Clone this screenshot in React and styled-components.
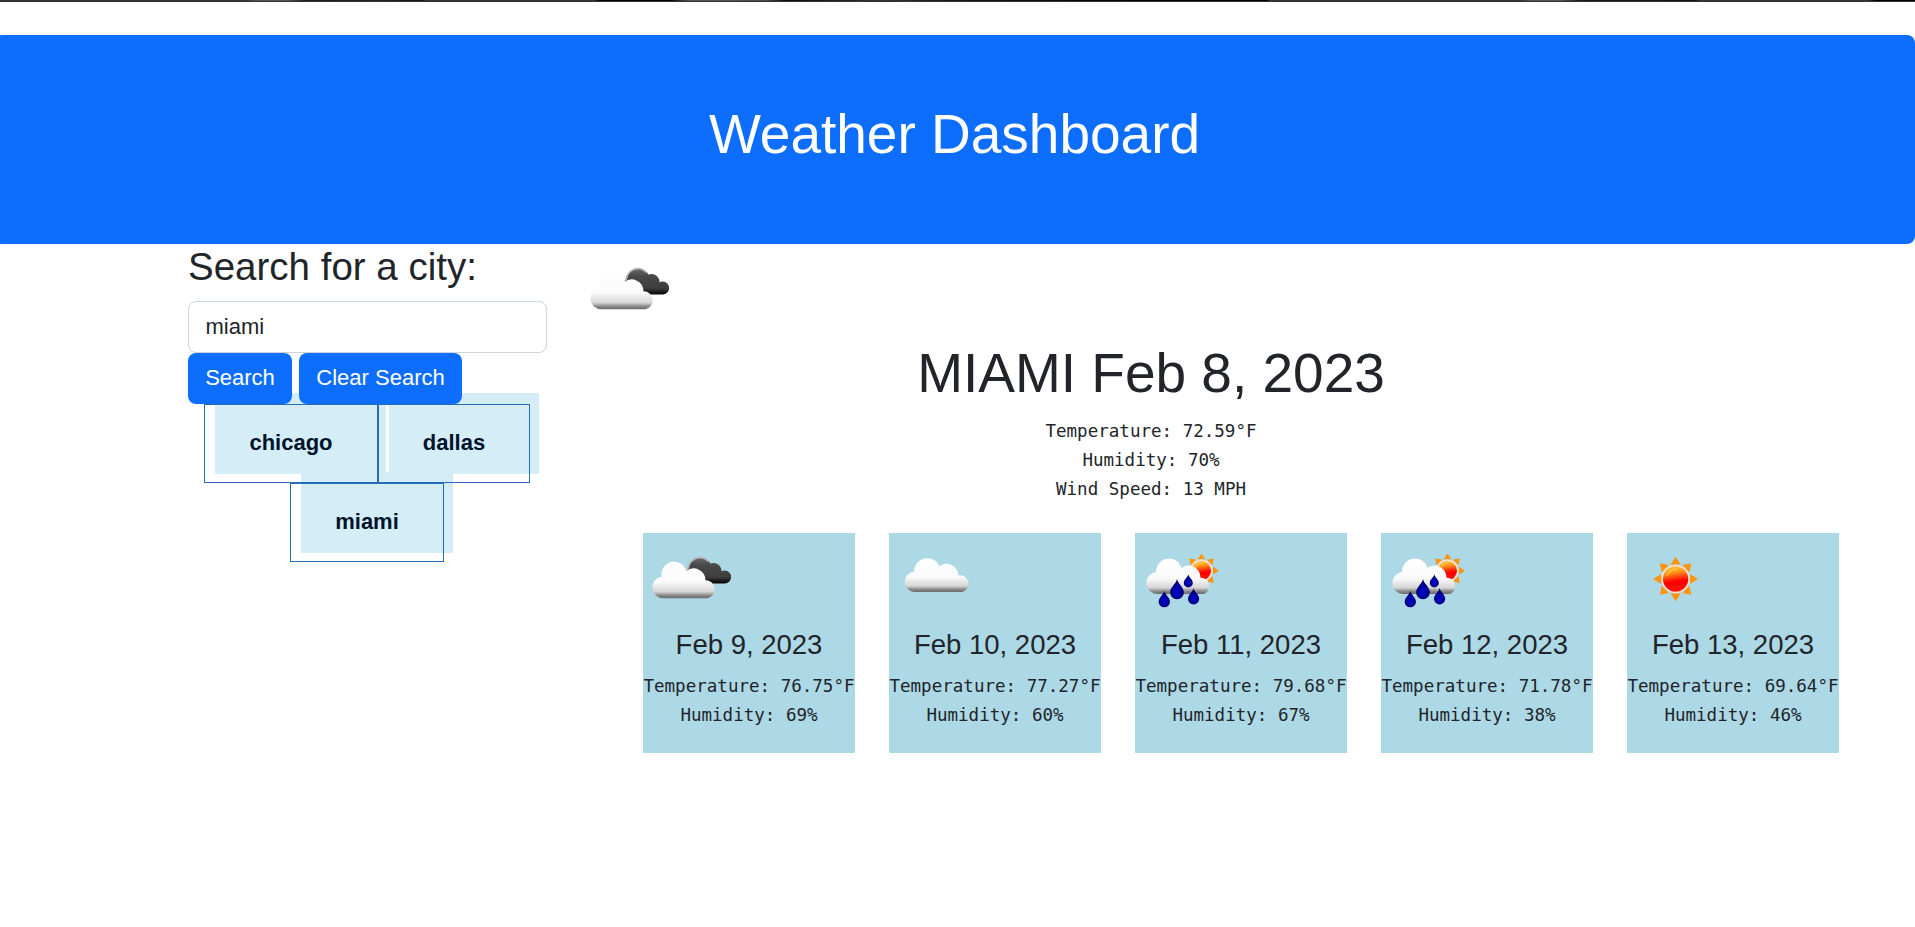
import React from "react";
import styled, { createGlobalStyle } from "styled-components";

const sans = '"Liberation Sans", Arial, sans-serif';
const mono = '"DejaVu Sans Mono", monospace';

const GlobalStyle = createGlobalStyle`
  *, *::before, *::after { box-sizing: border-box; }
  body {
    margin: 0;
    background: #fff;
    color: #212529;
    font-family: ${sans};
    font-size: 22px;
    line-height: 1.5;
    overflow: hidden;
  }
`;

const TopEdge = styled.div`
  height: 2px;
  border-bottom: 1px solid #363233;
  background: linear-gradient(90deg, #363233 0, #363233 12.8%, #565656 13.5%, #565656 15%, #1c1c1c 16%, #242424 20%, #111 22%, #363233 22.3%, #363233 31%, #000 31.3%, #000 35%, #5a5a5a 36%, #4c4c4c 40%, #0a0a0a 41%, #333 46%, #151515 50%, #000 60%, #000 66.2%, #363233 66.3%, #363233 79.3%, #565656 80%, #565656 81.5%, #1c1c1c 82.5%, #111 88.5%, #363233 88.8%, #363233 97.5%, #000 98%);
`;

const Banner = styled.header`
  height: 209px;
  margin: 33px 0 0 -6px;
  padding-top: 66px;
  border-radius: 8px;
  background: #0d6efd;
  color: #fff;
  text-align: center;
`;

const Title = styled.h1`
  margin: 0;
  font-size: 55px;
  font-weight: 400;
  line-height: 66px;
`;

const Page = styled.main`
  display: flex;
  align-items: flex-start;
  gap: 34px;
  padding-left: 188px;
`;

const Sidebar = styled.aside`
  width: 359px;
  flex: none;
`;

const SearchTitle = styled.h3`
  margin: 0 0 11px;
  font-size: 38.5px;
  font-weight: 400;
  line-height: 46px;
`;

const SearchInput = styled.input`
  display: block;
  width: 100%;
  height: 52px;
  padding: 0 16.5px 1px;
  border: 1px solid #ced4da;
  border-radius: 8px;
  background: #fff;
  color: #212529;
  font: 400 22px ${sans};
  outline: none;
`;

const ButtonRow = styled.div`
  display: flex;
  gap: 7px;
`;

const Button = styled.button`
  width: ${(p) => p.$width}px;
  height: 51px;
  padding: 0 0 1px;
  border: 0;
  border-radius: 8px;
  background: #0d6efd;
  color: #fff;
  font: 400 22px ${sans};
  white-space: nowrap;
`;

const CityList = styled.div`
  position: relative;
  z-index: -1;
  display: flex;
  flex-wrap: wrap;
  justify-content: center;
  padding-right: 1px;
`;

const City = styled.button`
  position: relative;
  width: ${(p) => p.$width}px;
  height: 79px;
  padding: 0 0 1px;
  border: 1px solid #266db6;
  background: transparent;
  color: #00132c;
  font: 700 22px ${sans};

  &::before {
    content: "";
    position: absolute;
    z-index: -1;
    top: -12px;
    left: 10px;
    width: ${(p) => p.$fill}px;
    height: 81px;
    background: #d5edf6;
  }
`;

const Results = styled.section`
  width: 1140px;
  flex: none;
`;

const CurrentTitle = styled.h1`
  margin: 0 0 11px;
  font-size: 55px;
  font-weight: 400;
  line-height: 66px;
  text-align: center;
`;

const Readings = styled.pre`
  margin: 0;
  font-family: ${mono};
  font-size: 17.55px;
  line-height: 29px;
  text-align: center;
`;

const Forecast = styled.div`
  display: flex;
  gap: 34px;
  margin: 29px 0 0 62px;
`;

const Card = styled.article`
  width: 212px;
  height: 220px;
  flex: none;
  background: #add8e6;
`;

const CardDate = styled.h5`
  margin: 0 0 11px;
  font-size: 27.5px;
  font-weight: 400;
  line-height: 33px;
  text-align: center;
`;

const IconBox = styled.svg`
  display: block;
  width: 100px;
  height: ${(p) => p.$height}px;
`;

function IconDefs() {
  return (
    <defs>
      <linearGradient id="white" x1="0" y1="0" x2="0" y2="1">
        <stop offset="0" stopColor="#fff" />
        <stop offset=".55" stopColor="#fafafa" />
        <stop offset=".82" stopColor="#d6d6d6" />
        <stop offset=".92" stopColor="#8a8a8a" />
        <stop offset="1" stopColor="#6a6a6a" />
      </linearGradient>
      <linearGradient id="dark" x1="0" y1="0" x2="0" y2="1">
        <stop offset="0" stopColor="#6a6a6a" />
        <stop offset=".3" stopColor="#484848" />
        <stop offset=".75" stopColor="#3e3e3e" />
        <stop offset="1" stopColor="#000" />
      </linearGradient>
      <linearGradient id="sun" x1=".35" y1="0" x2=".5" y2="1">
        <stop offset="0" stopColor="#ffc52c" />
        <stop offset=".25" stopColor="#ff961c" />
        <stop offset=".5" stopColor="#ff2a08" />
        <stop offset=".62" stopColor="#fb0000" />
        <stop offset="1" stopColor="#ff1200" />
      </linearGradient>
      <radialGradient id="drop" cx=".5" cy=".62" r=".5">
        <stop offset="0" stopColor="#0000e0" />
        <stop offset=".5" stopColor="#0000a8" />
        <stop offset="1" stopColor="#00005c" />
      </radialGradient>
      <filter id="soft" x="-5%" y="-5%" width="110%" height="110%">
        <feGaussianBlur stdDeviation=".6" />
      </filter>
    </defs>
  );
}

function Sun({ x, y, r, ray }) {
  const half = r * 0.37;
  return (
    <g transform={`translate(${x} ${y})`}>
      {[0, 45, 90, 135, 180, 225, 270, 315].map((a) => (
        <path key={a} d={`M${-half} ${-r - 1}L0 ${-ray}L${half} ${-r - 1}Z`} fill="#ff9408" transform={`rotate(${a})`} />
      ))}
      <circle r={r + 0.6} fill="#ffdccb" />
      <circle r={r - 1} fill="url(#sun)" />
      <path d={`M${-r * 0.65} ${-r * 0.2}A${r * 0.72} ${r * 0.72} 0 0 1 ${r * 0.1} ${-r * 0.72}`} fill="none" stroke="#ffe36a" strokeWidth="1.3" opacity=".6" />
    </g>
  );
}

function Drop({ x, y, s }) {
  return (
    <path
      transform={`translate(${x} ${y}) scale(${s})`}
      d="M0 0C.8 4.500 6.500 7.800 6.500 12.600A6.500 6.500 0 0 1-6.500 12.600C-6.500 7.800-.8 4.500 0 0Z"
      fill="url(#drop)"
    />
  );
}

function WeatherIcon({ kind, height = 100 }) {
  return (
    <IconBox $height={height} viewBox={`0 0 100 ${height}`}>
      <IconDefs />
      <g filter="url(#soft)">
        {kind === "broken" && (
          <>
            <path d="M43.500 37.500C45.500 37 46 35 46.500 33A11.500 11.500 0 0 1 67.500 30.500A8.300 8.300 0 0 1 78.600 38.300A6.500 6.500 0 1 1 82 50.500H60L54 38Z" fill="url(#dark)" />
            <path d="M44 37.500C46 29 50.500 24.800 57 24.500Q62 24.500 65 28.500" fill="none" stroke="#b8b8b8" strokeWidth="1.300" />
            <path d="M20.500 65.300A10.900 10.900 0 0 1 18.800 43.600A12.500 12.500 0 0 1 43.200 38.200A11.800 11.800 0 0 1 62.500 47.300A9.100 9.100 0 0 1 64.500 65.300Z" fill="url(#white)" />
          </>
        )}
        {kind === "cloud" && (
          <path d="M27 59A10.300 10.300 0 0 1 25 38.500A13.400 13.400 0 0 1 50.700 33.300A11.800 11.800 0 0 1 69.500 42.500A8.500 8.500 0 0 1 73.500 59Z" fill="url(#white)" />
        )}
        {kind === "rain" && (
          <>
            <Sun x={66.500} y={37.700} r={10.500} ray={17.300} />
            <path d="M24 61A11.100 11.100 0 0 1 21 39A13 13 0 0 1 46.500 35A12 12 0 0 1 65.500 44.700A8.400 8.400 0 0 1 68.700 61Z" fill="url(#white)" />
            <Drop x={42} y={46} s={1.060} />
            <Drop x={53.300} y={41.200} s={0.690} />
            <Drop x={29.300} y={57.700} s={0.870} />
            <Drop x={58.600} y={55} s={0.860} />
          </>
        )}
        {kind === "sun" && <Sun x={48.600} y={46} r={13.600} ray={22.300} />}
      </g>
    </IconBox>
  );
}

const cities = [
  { name: "chicago", width: 174, fill: 171 },
  { name: "dallas", width: 152, fill: 150 },
  { name: "miami", width: 154, fill: 152 },
];

const forecast = [
  { date: "Feb 9, 2023", icon: "broken", temp: "76.75", humidity: 69 },
  { date: "Feb 10, 2023", icon: "cloud", temp: "77.27", humidity: 60 },
  { date: "Feb 11, 2023", icon: "rain", temp: "79.68", humidity: 67 },
  { date: "Feb 12, 2023", icon: "rain", temp: "71.78", humidity: 38 },
  { date: "Feb 13, 2023", icon: "sun", temp: "69.64", humidity: 46 },
];

export default function App() {
  return (
    <>
      <GlobalStyle />
      <TopEdge />
      <Banner>
        <Title>Weather Dashboard</Title>
      </Banner>
      <Page>
        <Sidebar>
          <SearchTitle>Search for a city:</SearchTitle>
          <SearchInput defaultValue="miami" />
          <ButtonRow>
            <Button $width={104}>Search</Button>
            <Button $width={163}>Clear Search</Button>
          </ButtonRow>
          <CityList>
            {cities.map((c) => (
              <City key={c.name} $width={c.width} $fill={c.fill}>{c.name}</City>
            ))}
          </CityList>
        </Sidebar>
        <Results>
          <WeatherIcon kind="broken" height={96} />
          <CurrentTitle>MIAMI Feb 8, 2023</CurrentTitle>
          <Readings>{"Temperature: 72.59°F\nHumidity: 70%\nWind Speed: 13 MPH"}</Readings>
          <Forecast>
            {forecast.map((d) => (
              <Card key={d.date}>
                <WeatherIcon kind={d.icon} height={95} />
                <CardDate>{d.date}</CardDate>
                <Readings>{`Temperature: ${d.temp}°F\nHumidity: ${d.humidity}%`}</Readings>
              </Card>
            ))}
          </Forecast>
        </Results>
      </Page>
    </>
  );
}
